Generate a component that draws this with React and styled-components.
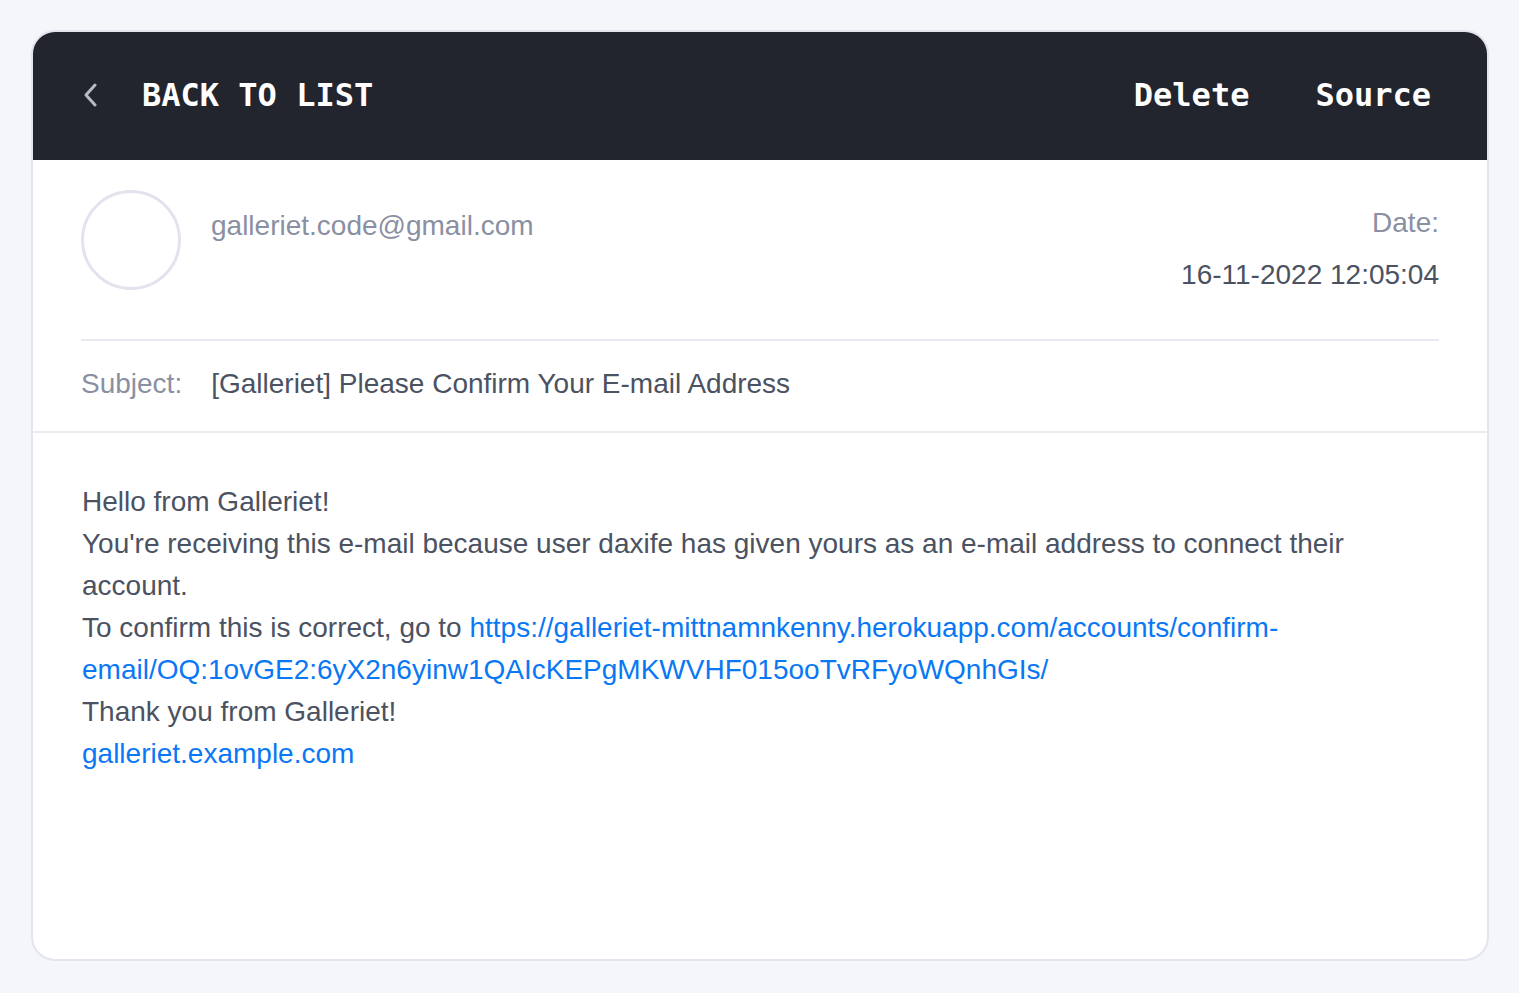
import React from 'react';
import styled, { createGlobalStyle } from 'styled-components';

const GlobalStyle = createGlobalStyle`
    * { box-sizing: border-box; }
    body {
        margin: 0;
        background: #f5f6f9;
        font-family: "Liberation Sans", Arial, sans-serif;
    }
`;

const Page = styled.div`
    padding: 30px 30px 31px 31px;
`;

const Card = styled.div`
    background: #fff;
    border: 2px solid #e4e4ee;
    border-radius: 24px;
    overflow: hidden;
    height: 931px;
    display: flex;
    flex-direction: column;
`;

const Header = styled.div`
    background: #22252e;
    height: 130px;
    margin: -2px -2px 0;
    display: flex;
    align-items: center;
    justify-content: space-between;
    padding: 0 58px 0 52px;
    font-family: "DejaVu Sans Mono", "Liberation Mono", monospace;
    font-weight: bold;
    font-size: 32px;
    color: #fff;
`;

const BackLink = styled.a`
    display: flex;
    align-items: center;
    gap: 45px;
    color: #fff;
    text-decoration: none;
    cursor: pointer;
`;

const Actions = styled.div`
    display: flex;
    gap: 66px;
`;

const Action = styled.a`
    color: #fff;
    text-decoration: none;
    cursor: pointer;
`;

const Meta = styled.div`
    padding: 30px 48px 0;
    border-bottom: 2px solid #ebebf1;
    font-size: 28px;
    line-height: 42px;
`;

const SenderRow = styled.div`
    display: flex;
    align-items: flex-start;
    padding-bottom: 43px;
    border-bottom: 2px solid #e9e9f0;
`;

const Avatar = styled.div`
    width: 100px;
    height: 100px;
    border-radius: 50%;
    border: 3px solid #e3e2ee;
    flex-shrink: 0;
`;

const Sender = styled.div`
    margin: 15px 0 0 30px;
    color: #8a8fa2;
    flex: 1;
`;

const DateBlock = styled.div`
    margin-top: 12px;
    text-align: right;
`;

const Label = styled.div`
    color: #8a8fa2;
`;

const DateValue = styled.div`
    margin-top: 10px;
    color: #4b5261;
`;

const SubjectRow = styled.div`
    display: flex;
    gap: 29px;
    padding: 22px 0 26px;
    color: #4b5261;
`;

const Body = styled.div`
    padding: 48px 49px;
    font-size: 28px;
    line-height: 42px;
    color: #4b5261;

    p { margin: 0; }
    a { color: #0a78f5; text-decoration: none; }
`;

const Chevron = () => (
    <svg width="14" height="24" viewBox="0 0 14 24" fill="none">
        <polyline points="12,2 3,12 12,22" stroke="#b9bbc3" strokeWidth="3" strokeLinecap="round" strokeLinejoin="round" />
    </svg>
);

const App = () => {
    const url = 'https://galleriet-mittnamnkenny.herokuapp.com/accounts/confirm-email/OQ:1ovGE2:6yX2n6yinw1QAIcKEPgMKWVHF015ooTvRFyoWQnhGIs/';

    return (
        <Page>
            <GlobalStyle />
            <Card>
                <Header>
                    <BackLink>
                        <Chevron />
                        BACK TO LIST
                    </BackLink>
                    <Actions>
                        <Action>Delete</Action>
                        <Action>Source</Action>
                    </Actions>
                </Header>
                <Meta>
                    <SenderRow>
                        <Avatar />
                        <Sender>galleriet.code@gmail.com</Sender>
                        <DateBlock>
                            <Label>Date:</Label>
                            <DateValue>16-11-2022 12:05:04</DateValue>
                        </DateBlock>
                    </SenderRow>
                    <SubjectRow>
                        <Label>Subject:</Label>
                        <span>[Galleriet] Please Confirm Your E-mail Address</span>
                    </SubjectRow>
                </Meta>
                <Body>
                    <p>Hello from Galleriet!</p>
                    <p>You're receiving this e-mail because user daxife has given yours as an e-mail address to connect their account.</p>
                    <p>To confirm this is correct, go to <a href={url}>{url}</a></p>
                    <p>Thank you from Galleriet!</p>
                    <p><a href="#">galleriet.example.com</a></p>
                </Body>
            </Card>
        </Page>
    );
};

export default App;
